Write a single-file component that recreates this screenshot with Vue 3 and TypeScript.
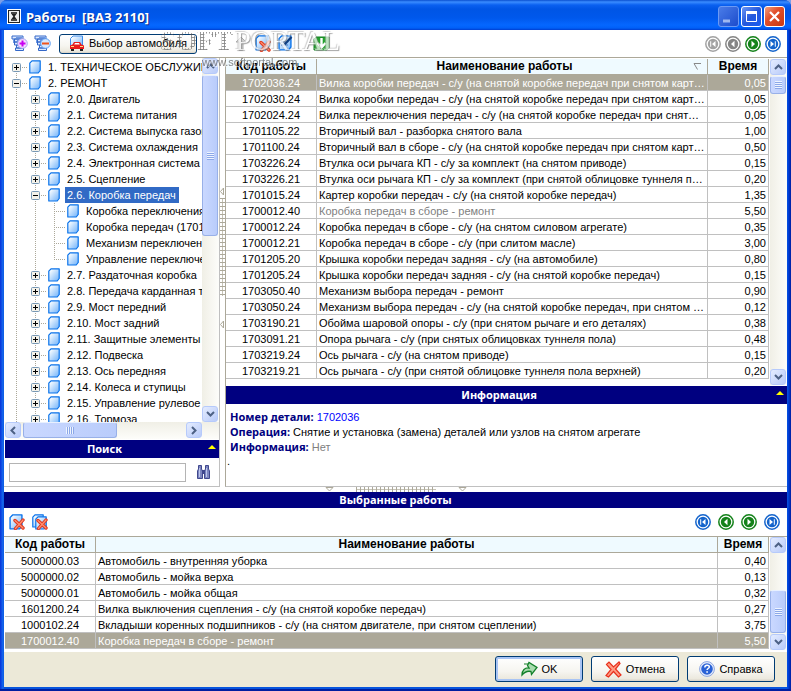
<script setup lang="ts">
import { ref } from 'vue'

interface TreeItem {
  text: string
  level: number
  state: 'plus' | 'minus' | 'leaf'
  last?: boolean
}

interface Work {
  code: string
  name: string
  time: string
  muted?: boolean
}

const tree: TreeItem[] = [
  { text: '1. ТЕХНИЧЕСКОЕ ОБСЛУЖИВАНИЕ', level: 0, state: 'plus' },
  { text: '2. РЕМОНТ', level: 0, state: 'minus' },
  { text: '2.0. Двигатель', level: 1, state: 'plus' },
  { text: '2.1. Система питания', level: 1, state: 'plus' },
  { text: '2.2. Система выпуска газов', level: 1, state: 'plus' },
  { text: '2.3. Система охлаждения', level: 1, state: 'plus' },
  { text: '2.4. Электронная система', level: 1, state: 'plus' },
  { text: '2.5. Сцепление', level: 1, state: 'plus' },
  { text: '2.6. Коробка передач', level: 1, state: 'minus' },
  { text: 'Коробка переключения', level: 2, state: 'leaf' },
  { text: 'Коробка передач (1701)', level: 2, state: 'leaf' },
  { text: 'Механизм переключения', level: 2, state: 'leaf' },
  { text: 'Управление переключением', level: 2, state: 'leaf', last: true },
  { text: '2.7. Раздаточная коробка', level: 1, state: 'plus' },
  { text: '2.8. Передача карданная т', level: 1, state: 'plus' },
  { text: '2.9. Мост передний', level: 1, state: 'plus' },
  { text: '2.10. Мост задний', level: 1, state: 'plus' },
  { text: '2.11. Защитные элементы', level: 1, state: 'plus' },
  { text: '2.12. Подвеска', level: 1, state: 'plus' },
  { text: '2.13. Ось передняя', level: 1, state: 'plus' },
  { text: '2.14. Колеса и ступицы', level: 1, state: 'plus' },
  { text: '2.15. Управление рулевое', level: 1, state: 'plus' },
  { text: '2.16. Тормоза', level: 1, state: 'plus' },
]

const works: Work[] = [
  { code: '1702036.24', name: 'Вилка коробки передач - с/у (на снятой коробке передач при снятом картере сцепления)', time: '0,05' },
  { code: '1702030.24', name: 'Вилка коробки передач - с/у (на снятой коробке передач при снятом картере сцепления)', time: '0,05' },
  { code: '1702024.24', name: 'Вилка переключения передач - с/у (на снятой коробке передач при снятом картере)', time: '0,05' },
  { code: '1701105.22', name: 'Вторичный вал - разборка снятого вала', time: '1,00' },
  { code: '1701100.24', name: 'Вторичный вал в сборе - с/у (на снятой коробке передач при снятом картере сцепления)', time: '0,50' },
  { code: '1703226.24', name: 'Втулка оси рычага КП - с/у за комплект (на снятом приводе)', time: '0,15' },
  { code: '1703226.21', name: 'Втулка оси рычага КП - с/у за комплект (при снятой облицовке туннеля пола верхней)', time: '0,20' },
  { code: '1701015.24', name: 'Картер коробки передач - с/у (на снятой коробке передач)', time: '1,35' },
  { code: '1700012.40', name: 'Коробка передач в сборе - ремонт', time: '5,50', muted: true },
  { code: '1700012.24', name: 'Коробка передач в сборе - с/у (на снятом силовом агрегате)', time: '0,35' },
  { code: '1700012.21', name: 'Коробка передач в сборе - с/у (при слитом масле)', time: '3,00' },
  { code: '1701205.20', name: 'Крышка коробки передач задняя - с/у (на автомобиле)', time: '0,80' },
  { code: '1701205.24', name: 'Крышка коробки передач задняя - с/у (на снятой коробке передач)', time: '0,15' },
  { code: '1703050.40', name: 'Механизм выбора передач - ремонт', time: '0,90' },
  { code: '1703050.24', name: 'Механизм выбора передач - с/у (на снятой коробке передач, при снятом картере)', time: '0,12' },
  { code: '1703190.21', name: 'Обойма шаровой опоры - с/у (при снятом рычаге и его деталях)', time: '0,38' },
  { code: '1703091.21', name: 'Опора рычага - с/у (при снятых облицовках туннеля пола)', time: '0,48' },
  { code: '1703219.24', name: 'Ось рычага - с/у (на снятом приводе)', time: '0,15' },
  { code: '1703219.21', name: 'Ось рычага - с/у (при снятой облицовке туннеля пола верхней)', time: '0,20' },
]

const chosen: Work[] = [
  { code: '5000000.03', name: 'Автомобиль - внутренняя уборка', time: '0,40' },
  { code: '5000000.02', name: 'Автомобиль - мойка верха', time: '0,13' },
  { code: '5000000.01', name: 'Автомобиль - мойка общая', time: '0,32' },
  { code: '1601200.24', name: 'Вилка выключения сцепления - с/у (на снятой коробке передач)', time: '0,27' },
  { code: '1000102.24', name: 'Вкладыши коренных подшипников - с/у (на снятом двигателе, при снятом сцеплении)', time: '3,75' },
  { code: '1700012.40', name: 'Коробка передач в сборе - ремонт', time: '5,50' },
]

const nav = [
  { label: 'Первая', d: 'M6.2 6.2h1v5.600h-1zM11.500 6v6L8 9z' },
  { label: 'Предыдущая', d: 'M10.500 5.800v6.400L7 9z' },
  { label: 'Следующая', d: 'M7.500 5.800v6.400L11 9z' },
  { label: 'Последняя', d: 'M10.800 6.200h1v5.600h-1zM6.500 6v6L10 9z' },
]
const topNav = ['#a2a2a2', '#858585', '#14821a', '#1464cc']
const bottomNav = ['#1464cc', '#14821a', '#14821a', '#1464cc']

const selectedNode = ref(8)
const selectedWork = ref(0)
const selectedChosen = ref(5)
const query = ref('')
</script>

<template>
  <div class="window">
    <svg class="defs" width="0" height="0" aria-hidden="true">
      <defs>
        <linearGradient id="page" x1="0" y1="0" x2="1" y2="1">
          <stop offset="0.15" stop-color="#f4faff" />
          <stop offset="1" stop-color="#6cb0fa" />
        </linearGradient>
      </defs>
      <symbol id="doc" viewBox="0 0 12 14">
        <path d="M3 .8h8.200v9.700l-2 2.500H.8V3.200z" fill="url(#page)" stroke="#0872ea" stroke-width="1.200" stroke-linejoin="round" />
      </symbol>
      <symbol id="cross" viewBox="0 0 12 12">
        <path d="M2 2.500l8 7.500M10 2L2.500 10.500" stroke="#e0381c" stroke-width="3.400" stroke-linecap="round" />
        <path d="M2 2.500l8 7.500M10 2L2.500 10.500" stroke="#ff8e72" stroke-width="1.200" stroke-linecap="round" />
      </symbol>
      <symbol id="list" viewBox="0 0 17 16">
        <path d="M1 1h11v3H1zM3.500 4h8v3h-8zM3.500 7h8v3h-8zM5.500 10h6v3h-6zM4.500 13h8v2.500h-8z" fill="#dce9ff" stroke="#3468c8" />
        <path d="M2.500 4v4M5 2.500h6M6 5.500h4M6 8.500h4" fill="none" stroke="#6c98e4" />
      </symbol>
    </svg>

    <header class="titlebar">
      <svg class="app-icon" width="14" height="15" viewBox="0 0 14 15" aria-hidden="true">
        <rect width="14" height="15" fill="#fff" /><rect x="1.500" y="1.500" width="11" height="12" fill="#eee" stroke="#222" />
        <path d="M4 4h6M4 11h6" stroke="#111" stroke-width="1.600" /><path d="M4.500 5h5L7.700 7.500 9.500 10h-5l1.800-2.500z" fill="#222" />
      </svg>
      <h1>Работы&nbsp; [ВАЗ 2110]</h1>
      <button class="win-btn dim" aria-label="Свернуть"><svg width="19" height="19"><path d="M4 14h7" stroke="#9fb8f0" stroke-width="3" /></svg></button>
      <button class="win-btn" aria-label="Развернуть"><svg width="19" height="19"><path d="M4.500 5v9.500h10V5" fill="none" stroke="#fff" /><path d="M4 5.500h11" stroke="#fff" stroke-width="3" /></svg></button>
      <button class="win-btn close" aria-label="Закрыть"><svg width="19" height="19"><path d="M5 5l9 9M14 5l-9 9" stroke="#fff" stroke-width="2.200" /></svg></button>
    </header>

    <div class="toolbar top">
      <button class="tool" aria-label="Развернуть дерево">
        <svg width="17" height="17" viewBox="0 0 17 17"><use href="#list" width="17" height="16" /><circle cx="11.500" cy="8.500" r="4.800" fill="#f6dcff" stroke="#a9a4ee" /><path d="M11.500 5.500v6M8.500 8.500h6" stroke="#c800f0" stroke-width="2" /></svg>
      </button>
      <button class="tool" aria-label="Свернуть дерево">
        <svg width="17" height="17" viewBox="0 0 17 17"><use href="#list" width="17" height="16" /><circle cx="11.500" cy="8.500" r="4.800" fill="#d5e8ff" stroke="#5c9cf0" /><path d="M8 8.500h7" stroke="#f0541c" stroke-width="2.200" /></svg>
      </button>
      <button class="push car">
        <svg width="16" height="17" viewBox="0 0 16 17"><path d="M4 1h9.500v12H1.500V3.500z" fill="url(#page)" stroke="#3c8cea" /><path d="M1 10.500l2.500-1 1.500-2.500h6l1.500 2.500 2.500 1v3.500H1z" fill="#e81c1c" /><path d="M5.200 9.500l.8-1.500h4l.8 1.500z" fill="#fff" /><path d="M2 14h3v2H2zM11 14h3v2h-3z" fill="#222" /><path d="M2 11.500h3M11 11.500h3" stroke="#ffe080" /></svg>
        <span>Выбор автомобиля</span>
      </button>
      <div class="group">
        <button class="tool" aria-label="Вверх"><svg width="16" height="17"><path d="M8 2l5 5h-3v8H6V7H3z" fill="#d8d8d8" stroke="#aaa" /></svg></button>
        <button class="tool" aria-label="Удалить"><svg width="17" height="17"><use href="#doc" x="0" y="0" width="14" height="16" /><use href="#cross" x="4" y="5" width="12" height="12" /></svg></button>
        <button class="tool" aria-label="Изменить"><svg width="17" height="17"><use href="#doc" x="0" y="0" width="14" height="16" /><path d="M3 7h5M3 10h7" stroke="#3870c0" /><path d="M13.500 2l-7 7.500" stroke="#0c3c80" stroke-width="2.400" /></svg></button>
      </div>
      <button class="tool" aria-label="Добавить в выбранные"><svg width="17" height="17"><path d="M3 2h13v11l-2 2H1V4z" fill="#23a12c" stroke="#128020" /><path d="M8.500 3v9M4.500 8l4 4.500 4-4.500" fill="none" stroke="#fff" stroke-width="2.400" /></svg></button>
      <nav class="nav">
        <button v-for="(n, i) in nav" :key="n.label" class="tool" :aria-label="n.label">
          <svg width="18" height="18"><circle cx="9" cy="9" r="7.200" fill="#fff" :stroke="topNav[i]" stroke-width="1.500" /><circle cx="9" cy="9" r="5.200" :fill="topNav[i]" /><path :d="n.d" fill="#fff" /></svg>
        </button>
      </nav>
      <div class="watermark" aria-hidden="true"><b>SOFT</b><i>PORTAL</i><small>www.softportal.com</small></div>
    </div>

    <main class="work-area">
      <aside class="left">
        <div class="tree-box">
          <ul class="tree" role="tree">
            <li v-for="(node, i) in tree" :key="i" role="treeitem" :aria-selected="i === selectedNode" @click="selectedNode = i">
              <svg v-for="g in node.level" :key="g" class="guide" width="19" height="16">
                <path d="M9.500 0v16" />
              </svg>
              <svg class="guide" width="22" height="16">
                <path :d="i === 0 ? 'M9.500 8v8' : node.last ? 'M9.500 0v8' : 'M9.500 0v16'" />
                <path d="M9 8.500h12" />
                <template v-if="node.state !== 'leaf'">
                  <rect x="5.500" y="4.500" width="8" height="8" rx="1" class="knob" />
                  <path d="M7 8.500h5" class="sign" /><path v-if="node.state === 'plus'" d="M9.500 6v5" class="sign" />
                </template>
              </svg>
              <svg width="12" height="14"><use href="#doc" width="12" height="14" /></svg>
              <span class="label" :class="{ on: i === selectedNode }">{{ node.text }}</span>
            </li>
          </ul>
          <div class="vbar">
            <button class="arrow" aria-label="Вверх"><svg width="9" height="6"><path d="M1 5l3.500-3.500L8 5" /></svg></button>
            <div class="thumb tree-thumb"><i class="grip"></i></div>
            <button class="arrow end" aria-label="Вниз"><svg width="9" height="6"><path d="M1 1l3.500 3.500L8 1" /></svg></button>
          </div>
        </div>
        <div class="hbar">
          <button class="arrow" aria-label="Влево"><svg width="6" height="9"><path d="M5 1L1.500 4.500 5 8" /></svg></button>
          <div class="thumb wide"><i class="grip side"></i></div>
          <button class="arrow right-end" aria-label="Вправо"><svg width="6" height="9"><path d="M1 1l3.500 3.500L1 8" /></svg></button>
        </div>
        <h2 class="band tall">Поиск<svg class="fold" width="8" height="5"><path d="M0 4l4-4 4 4z" fill="#ff0" /></svg></h2>
        <form class="search" @submit.prevent>
          <input v-model="query" type="text" aria-label="Поиск" />
          <button class="tool" aria-label="Найти">
            <svg width="15" height="16" viewBox="0 0 15 16"><path d="M2.500 1.500h3V5l1 2v7.500h-5V7l1-2zM9.500 1.500h3V5l1 2v7.500h-5V7l1-2z" fill="#7d86bf" stroke="#40488e" /><path d="M6 6h3v4H6z" fill="#40488e" /><path d="M3.500 4v9M10.500 4v9" stroke="#bcc5ee" /></svg>
          </button>
        </form>
      </aside>

      <div class="vsplit" aria-hidden="true">
        <svg width="5" height="150" viewBox="0 0 5 150"><path d="M3.500 4v7L.5 7.500zM3.500 137v7L.5 140.500z" fill="#fff" stroke="#aca899" /><path d="M2.500 14v98" stroke="#c6c3b6" /><path d="M2.500 14v98" stroke="#aca899" stroke-width="5" stroke-dasharray="1 3" /></svg>
      </div>

      <section class="right">
        <div class="grid-box">
          <table>
            <colgroup><col class="c-code" /><col /><col class="c-time" /></colgroup>
            <thead><tr><th>Код работы</th><th class="sorted">Наименование работы<svg width="9" height="8"><path d="M8 .5H1l3.500 6" fill="none" stroke="#888" /></svg></th><th>Время</th></tr></thead>
            <tbody>
              <tr v-for="(w, i) in works" :key="w.code" :class="{ on: i === selectedWork, muted: w.muted }" @click="selectedWork = i">
                <td>{{ w.code }}</td><td>{{ w.name }}</td><td>{{ w.time }}</td>
              </tr>
            </tbody>
          </table>
          <div class="vbar">
            <button class="arrow" aria-label="Вверх"><svg width="9" height="6"><path d="M1 5l3.500-3.500L8 5" /></svg></button>
            <div class="thumb small"><i class="grip"></i></div>
            <button class="arrow end" aria-label="Вниз"><svg width="9" height="6"><path d="M1 1l3.500 3.500L8 1" /></svg></button>
          </div>
        </div>
        <h2 class="band tall info-band">Информация<svg class="fold" width="8" height="5"><path d="M0 4l4-4 4 4z" fill="#ff0" /></svg></h2>
        <div class="info">
          <p><b>Номер детали:</b> <a href="#">1702036</a></p>
          <p><b>Операция:</b> Снятие и установка (замена) деталей или узлов на снятом агрегате</p>
          <p><b>Информация:</b> <span class="none">Нет</span></p>
          <p class="dot">.</p>
        </div>
      </section>
    </main>

    <div class="hsplit" aria-hidden="true">
      <svg width="142" height="5" viewBox="0 0 142 5"><path d="M1 .5h7L4.500 4zM134 .5h7L137.500 4z" fill="#fff" stroke="#aca899" /><path d="M31 2.500h80" stroke="#c6c3b6" /><path d="M31 2.500h80" stroke="#aca899" stroke-width="5" stroke-dasharray="1 3" /></svg>
    </div>

    <section class="bottom">
      <h2 class="band">Выбранные работы</h2>
      <div class="toolbar">
        <button class="tool" aria-label="Удалить работу"><svg width="17" height="17"><use href="#doc" x="0" y="0" width="14" height="16" /><use href="#cross" x="4" y="4" width="12" height="12" /></svg></button>
        <button class="tool" aria-label="Удалить все"><svg width="17" height="17"><use href="#doc" x="0" y="0" width="12" height="14" /><use href="#doc" x="3" y="2" width="12" height="14" /><use href="#cross" x="4" y="4" width="12" height="12" /></svg></button>
        <nav class="nav spaced">
          <button v-for="(n, i) in nav" :key="n.label" class="tool" :aria-label="n.label">
            <svg width="18" height="18"><circle cx="9" cy="9" r="7.200" fill="#fff" :stroke="bottomNav[i]" stroke-width="1.500" /><circle cx="9" cy="9" r="5.200" :fill="bottomNav[i]" /><path :d="n.d" fill="#fff" /></svg>
          </button>
        </nav>
      </div>
      <div class="grid-box lower">
        <table>
          <colgroup><col class="c-code" /><col /><col class="c-time narrow" /></colgroup>
          <thead><tr><th>Код работы</th><th>Наименование работы</th><th>Время</th></tr></thead>
          <tbody>
            <tr v-for="(w, i) in chosen" :key="w.code" :class="{ on: i === selectedChosen }" @click="selectedChosen = i">
              <td>{{ w.code }}</td><td>{{ w.name }}</td><td>{{ w.time }}</td>
            </tr>
          </tbody>
        </table>
        <div class="vbar">
          <button class="arrow" aria-label="Вверх"><svg width="9" height="6"><path d="M1 5l3.500-3.500L8 5" /></svg></button>
          <div class="thumb low"><i class="grip"></i></div>
          <button class="arrow" aria-label="Вниз"><svg width="9" height="6"><path d="M1 1l3.500 3.500L8 1" /></svg></button>
        </div>
      </div>
    </section>

    <footer class="actions">
      <button class="push default">
        <svg width="17" height="16" viewBox="0 0 17 16"><path d="M1 14C1 9 4 6.500 8 7L6.500 4.500 8 1.500l8 5-5.500 7-.5-3C6 9.500 3.500 11 1 14z" fill="#a9dcae" stroke="#14802a" stroke-width="1.300" /><path d="M3 3h4" stroke="#14802a" /></svg>
        <span>OK</span>
      </button>
      <button class="push">
        <svg width="17" height="17" viewBox="0 0 17 17"><path d="M1.500 3.500L4 1l4.500 5L14 1l1 1.500L10.500 8l5.500 6-2.500 2L8.500 10.500 3.500 16 1 14.500 6 8.500z" fill="#ff9c84" stroke="#e8301c" stroke-width="1.200" /></svg>
        <span>Отмена</span>
      </button>
      <button class="push">
        <svg width="16" height="16" viewBox="0 0 16 16"><circle cx="8" cy="8" r="7.400" fill="#e8eefc" stroke="#8aa4e0" /><circle cx="8" cy="8" r="5.800" fill="#2a62d6" /><path d="M5.800 6.500c0-3 4.500-2.800 4.500-.5 0 1.500-2.200 1.500-2.200 3" fill="none" stroke="#fff" stroke-width="1.500" /><path d="M7.300 10.300h1.600v1.500H7.300z" fill="#fff" /></svg>
        <span>Справка</span>
      </button>
    </footer>
  </div>
</template>

<style>
body { margin: 0; background: #7b9ee8; }
</style>

<style scoped>
* { box-sizing: border-box; }
.window { position: relative; display: flex; flex-direction: column; min-height: 100vh; padding: 0 4px 4px; overflow: hidden; border-radius: 7px 7px 0 0; background: linear-gradient(90deg, #0831d9, #166aee 3px, #0855dd 4px, #0855dd calc(100% - 4px), #0044e0 calc(100% - 3px), #001ea0); box-shadow: inset 0 -2px #001ea0; font: 11px/15px "Liberation Sans", Arial, sans-serif; color: #000; }
.defs { position: absolute; }
svg { display: block; flex: none; }
button { font: inherit; color: inherit; cursor: pointer; }
h1, h2, p, ul { margin: 0; padding: 0; }

.titlebar { display: flex; align-items: center; gap: 2px; height: 30px; margin: 0 -4px; padding: 3px 6px 0 7px; background: linear-gradient(#0a4fd0, #3a8cff 2px, #0a60f0 5px, #0055e5 9px, #0058ec 18px, #0567ff 25px, #0060f8 28px, #003dd0); }
.app-icon { margin-right: 3px; }
h1 { flex: 1; font: bold 13px/20px "Noto Sans", "Open Sans", sans-serif; color: #fff; text-shadow: 1px 1px #0a2a8c; white-space: pre; }
.win-btn { width: 21px; height: 21px; padding: 0; border: 1px solid #fff; border-radius: 3px; background: linear-gradient(135deg, #6c97f5, #2458dc 50%, #1c5cf0); }
.win-btn.dim { border-color: #6c9af4; background: linear-gradient(135deg, #4a7ce8, #1c4ccc); }
.win-btn.close { background: linear-gradient(135deg, #f0a080, #e2502c 40%, #c83810); }

.toolbar { position: relative; display: flex; align-items: center; gap: 6px; height: 28px; padding: 0 6px 0 5px; background: #fff; }
.toolbar.top { padding: 0 5px 0 7px; border-bottom: 1px solid #aca899; }
.tool { display: grid; place-items: center; padding: 0; border: 0; background: none; }
.group { display: flex; gap: 6px; margin-left: 30px; }
.group + .tool { margin-left: 12px; }
.nav { display: flex; gap: 2px; margin-left: auto; }
.nav.spaced { gap: 5px; }
.push { display: flex; align-items: center; justify-content: center; gap: 4px; width: 88px; height: 26px; padding: 0; border: 1px solid #003c74; border-radius: 3px; background: linear-gradient(#fff, #f6f5f0 60%, #ece9de 90%, #d6d0c5); }
.push.car { width: 138px; height: 20px; margin-left: 2px; }
.push.default { box-shadow: inset 0 0 0 2px #a8c4f4; }

.watermark { position: absolute; left: 156px; top: -6px; display: flex; flex-wrap: wrap; width: 190px; pointer-events: none; opacity: .7; z-index: 3; }
.watermark b { margin-right: 2px; color: transparent; background: radial-gradient(circle, #555 45%, transparent 60%) 0 0 / 3px 3px; background-clip: text; -webkit-background-clip: text; font: bold 28px/34px "Liberation Serif", serif; }
.watermark i { font: 28px/34px "Liberation Serif", serif; color: #fff; text-shadow: 1px 1px 1px #777, -1px -1px 1px #bbb; }
.watermark small { margin: -2px 0 0 42px; font: 11px/12px "Liberation Sans", sans-serif; color: #555; text-shadow: 1px 1px #fff; }

.work-area { flex: 1; display: grid; grid-template-columns: 216px 5px minmax(0, 1fr); background: #fff; }
.left { display: flex; flex-direction: column; min-width: 0; padding-left: 1px; border-right: 1px solid #c0c0c0; border-bottom: 1px solid #c0c0c0; }
.tree-box { flex: 1 1 0; height: 0; min-height: 0; display: flex; overflow: hidden; }
.tree { flex: 1; min-width: 0; padding: 1px 0 0 2px; overflow: hidden; list-style: none; }
.tree li { display: flex; align-items: center; height: 16px; white-space: nowrap; }
.guide path { fill: none; stroke: #aca899; stroke-dasharray: 1 1; }
.guide .knob { fill: #f4f2ea; stroke: #7898b5; }
.guide .sign { stroke: #000; stroke-dasharray: none; }
.label { margin-left: 5px; padding: 0 3px 0 2px; line-height: 16px; }
.label.on { background: #316ac5; color: #fff; }

.vbar { display: flex; flex-direction: column; gap: 1px; flex: none; width: 17px; background: linear-gradient(90deg, #f0efe6, #fdfdfa); }
.arrow { display: grid; place-items: center; flex: none; width: 16px; height: 16px; padding: 0; border: 1px solid #b6cafb; border-radius: 3px; background: linear-gradient(135deg, #e4ecff, #b9cbf9); }
.arrow path { fill: none; stroke: #4d6185; stroke-width: 2; }
.arrow.end { margin-top: auto; }
.thumb { display: grid; place-items: center; flex: none; width: 16px; border: 1px solid #98b0e8; border-top-color: #e8f0ff; border-radius: 3px; background: linear-gradient(90deg, #cad8ff, #b9ccfb); }
.tree-thumb { height: 161px; }
.small { height: 18px; }
.low { height: 43px; margin-top: auto; }
.grip { width: 7px; height: 8px; background: repeating-linear-gradient(#eef4ff 0 1px, #8ca8e8 1px 2px); }
.grip.side { width: 8px; height: 7px; background: repeating-linear-gradient(90deg, #eef4ff 0 1px, #8ca8e8 1px 2px); }
.hbar { display: flex; gap: 2px; height: 17px; padding-right: 17px; background: linear-gradient(#f0efe6, #fdfdfa); }
.thumb.wide { width: 94px; height: 16px; }
.right-end { margin-left: auto; }

.band { position: relative; height: 16px; background: #000080; color: #fff; text-align: center; font: bold 11px/16px "Noto Sans", "Open Sans", sans-serif; }
.band.tall { height: 18px; padding-right: 15px; line-height: 18px; }
.left .band { margin-top: 1px; }
.fold { position: absolute; right: 3px; top: 5px; }
.search { display: flex; align-items: center; justify-content: space-between; height: 28px; padding: 0 8px 0 4px; }
.search input { width: 177px; height: 19px; padding: 0 3px; border: 1px solid #b4b4b4; outline: 0; font: inherit; }

.vsplit { display: flex; align-items: flex-start; padding-top: 126px; }
.right { display: flex; flex-direction: column; min-width: 0; border-left: 1px solid #aca899; border-bottom: 1px solid #c0c0c0; }
.grid-box { display: flex; gap: 1px; padding-top: 1px; height: 327px; }
.grid-box.lower { height: 116px; padding: 0 0 2px 1px; border-top: 1px solid #aca899; }
table { flex: 1; width: 0; align-self: flex-start; table-layout: fixed; border-collapse: separate; border-spacing: 0; }
.c-code { width: 91px; }
.c-time { width: 61px; }
.c-time.narrow { width: 51px; }
th { height: 16px; padding: 0 3px; border-right: 1px solid #aca899; border-bottom: 1px solid #aca899; background: #effaff; font: bold 12px/15px "Liberation Sans", Arial, sans-serif; text-align: center; white-space: nowrap; }
th.sorted svg { float: right; margin: 4px 2px 0 4px; }
td { height: 16px; padding: 2px 2px 0; border-right: 1px solid #c0c0c0; border-bottom: 1px solid #c0c0c0; overflow: hidden; text-overflow: ellipsis; white-space: nowrap; line-height: 13px; }
td:first-child { text-align: center; }
td:last-child { text-align: right; }
tr.on td { background: #aca899; color: #fff; }
tr.muted td:nth-child(2) { color: #808080; }
.info-band { margin-top: 1px; }
.info { flex: 1; padding: 5px 4px 0; }
.info p { height: 15px; }
.info b { font: bold 11px/15px "Noto Sans", "Open Sans", sans-serif; color: #000080; }
.info a { color: #0000ff; text-decoration: none; }
.none { color: #808080; }
.info .dot { margin-left: -3px; }
.hsplit { display: flex; justify-content: center; height: 5px; background: #fff; }
.bottom { background: #fff; }
.actions { display: flex; justify-content: flex-end; gap: 8px; height: 35px; padding: 4px 12px 4px 0; background: #ece9d8; }
</style>
